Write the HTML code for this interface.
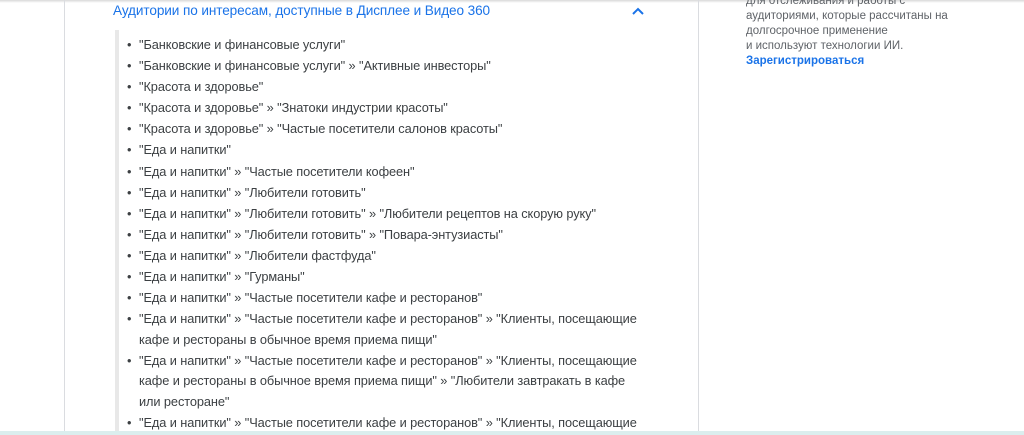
<!DOCTYPE html>
<html><head><meta charset="utf-8"><style>
html,body{margin:0;width:1024px;height:435px;overflow:hidden}
body{background:#fff;font-family:"Liberation Sans","DejaVu Sans",sans-serif;position:relative}
.shadow{position:absolute;left:0;top:0;width:1024px;height:3px;background:linear-gradient(#d8d8d8,#fff)}
.vl{position:absolute;top:0;width:1px;height:435px;background:#dadce0}
.title{position:absolute;left:113px;top:3px;font-size:13.6px;color:#1a73e8;letter-spacing:-0.1px}
.chev{position:absolute;left:631px;top:6px}
.bar{position:absolute;left:115px;top:30px;width:4px;height:405px;background:#e8e8e8}
ul{position:absolute;left:127px;top:35px;margin:0;padding:0;list-style:none;width:530px}
li{font-size:12.8px;color:#3c4043;line-height:20.5px;margin-bottom:0.6px;padding-left:12px;position:relative;letter-spacing:-0.1px}
li:before{content:"•";position:absolute;left:0;top:0;color:#3c4043}
.side{position:absolute;left:746px;top:-6px;font-size:11.5px;color:#5f6368;line-height:15px}
.side b{color:#1a73e8}
.bottom{position:absolute;left:0;top:431px;width:1024px;height:4px;background:#dbeeee}
</style></head><body>
<div class="shadow"></div>
<div class="vl" style="left:64px"></div>
<div class="vl" style="left:698px"></div>
<div class="title">Аудитории по интересам, доступные в Дисплее и Видео 360</div>
<svg class="chev" width="14" height="10" viewBox="0 0 14 10"><path d="M2 8 L7 3 L12 8" stroke="#1a73e8" stroke-width="2" fill="none"/></svg>
<div class="bar"></div>
<ul>
<li>"Банковские и финансовые услуги"</li>
<li>"Банковские и финансовые услуги" » "Активные инвесторы"</li>
<li>"Красота и здоровье"</li>
<li>"Красота и здоровье" » "Знатоки индустрии красоты"</li>
<li>"Красота и здоровье" » "Частые посетители салонов красоты"</li>
<li>"Еда и напитки"</li>
<li>"Еда и напитки" » "Частые посетители кофеен"</li>
<li>"Еда и напитки" » "Любители готовить"</li>
<li>"Еда и напитки" » "Любители готовить" » "Любители рецептов на скорую руку"</li>
<li>"Еда и напитки" » "Любители готовить" » "Повара-энтузиасты"</li>
<li>"Еда и напитки" » "Любители фастфуда"</li>
<li>"Еда и напитки" » "Гурманы"</li>
<li>"Еда и напитки" » "Частые посетители кафе и ресторанов"</li>
<li>"Еда и напитки" » "Частые посетители кафе и ресторанов" » "Клиенты, посещающие<br>кафе и рестораны в обычное время приема пищи"</li>
<li>"Еда и напитки" » "Частые посетители кафе и ресторанов" » "Клиенты, посещающие<br>кафе и рестораны в обычное время приема пищи" » "Любители завтракать в кафе<br>или ресторане"</li>
<li>"Еда и напитки" » "Частые посетители кафе и ресторанов" » "Клиенты, посещающие</li>
</ul>
<div class="side">
для отслеживания и работы с<br>аудиториями, которые рассчитаны на<br>долгосрочное применение<br>и используют технологии ИИ.<br><b>Зарегистрироваться</b>
</div>
<div class="bottom"></div>
</body></html>
